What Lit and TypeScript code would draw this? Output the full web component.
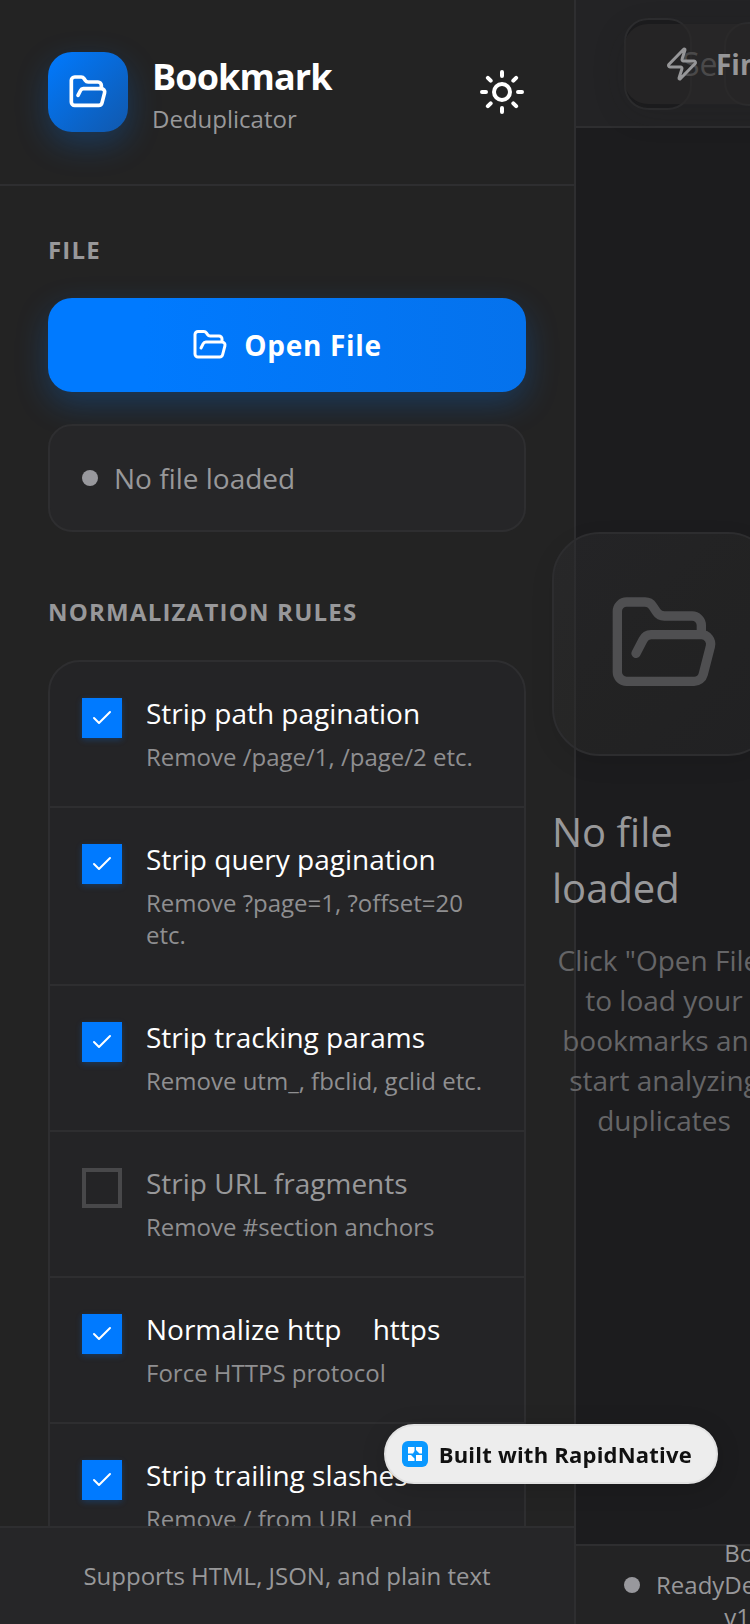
import { LitElement, html, css, svg } from "lit";
import { customElement, state } from "lit/decorators.js";

interface Rule {
  id: string;
  title: string;
  tail?: string;
  note: string;
  on: boolean;
}

const FOLDER = svg`<path d="m6 14 1.5-2.9A2 2 0 0 1 9.24 10H20a2 2 0 0 1 1.94 2.5l-1.54 6a2 2 0 0 1-1.95 1.5H4a2 2 0 0 1-2-2V5a2 2 0 0 1 2-2h3.9a2 2 0 0 1 1.69.9l.81 1.2a2 2 0 0 0 1.67.9H18a2 2 0 0 1 2 2v2"/>`;
const SUN = svg`<circle cx="12" cy="12" r="4"/><path d="M12 2v2M12 20v2M4.93 4.93l1.41 1.41M17.66 17.66l1.41 1.41M2 12h2M20 12h2M6.34 17.66l-1.41 1.41M19.07 4.93l-1.41 1.41"/>`;
const ZAP = svg`<path d="M4 14a1 1 0 0 1-.78-1.63l9.9-10.2a.5.5 0 0 1 .86.46l-1.92 6.02A1 1 0 0 0 13 10h7a1 1 0 0 1 .78 1.63l-9.9 10.2a.5.5 0 0 1-.86-.46l1.92-6.02A1 1 0 0 0 11 14z"/>`;
const CHECK = svg`<path d="M20 6 9 17l-5-5"/>`;

const icon = (size: number, stroke: number, shape: unknown, cls = "") => html`<svg
  class=${cls}
  width=${size}
  height=${size}
  viewBox="0 0 24 24"
  fill="none"
  stroke="currentColor"
  stroke-width=${stroke}
  stroke-linecap="round"
  stroke-linejoin="round"
  aria-hidden="true"
>${shape}</svg>`;

@customElement("app-root")
export class AppRoot extends LitElement {
  @state() private rules: Rule[] = [
    { id: "path", title: "Strip path pagination", note: "Remove /page/1, /page/2 etc.", on: true },
    { id: "query", title: "Strip query pagination", note: "Remove ?page=1, ?offset=20 etc.", on: true },
    { id: "tracking", title: "Strip tracking params", note: "Remove utm_, fbclid, gclid etc.", on: true },
    { id: "fragment", title: "Strip URL fragments", note: "Remove #section anchors", on: false },
    { id: "https", title: "Normalize http", tail: "https", note: "Force HTTPS protocol", on: true },
    { id: "slash", title: "Strip trailing slashes", note: "Remove / from URL end", on: true },
  ];

  static styles = css`
    :host {
      --line: #2e2e30;
      --muted: #98989a;
      --glow: 0 12px 32px rgba(0, 122, 255, 0.25);
      display: flex;
      height: 100vh;
      overflow: hidden;
      background: #1c1c1e;
      color: #fff;
      font-family: "Open Sans", "Noto Sans", sans-serif;
      font-size: 28px;
      line-height: 40px;
    }
    * {
      box-sizing: border-box;
      margin: 0;
    }
    button,
    input {
      font: inherit;
      color: inherit;
      border: 0;
      padding: 0;
      background: none;
    }
    svg {
      display: block;
      flex: none;
    }

    .sidebar {
      flex: none;
      width: 576px;
      display: flex;
      flex-direction: column;
      background: #232323;
      border-right: 2px solid var(--line);
    }
    .brand {
      display: flex;
      align-items: center;
      gap: 24px;
      padding: 52px 48px;
      border-bottom: 2px solid var(--line);
    }
    .logo {
      display: grid;
      place-items: center;
      width: 80px;
      height: 80px;
      border-radius: 24px;
      background: linear-gradient(135deg, #007aff, #1158ac);
      box-shadow: var(--glow);
    }
    .names {
      flex: 1;
      margin: -4px 0;
    }
    .name {
      font-size: 36px;
      line-height: 54px;
      font-weight: 700;
      letter-spacing: -0.025em;
    }
    .sub {
      color: var(--muted);
      font-size: 24px;
      line-height: 30px;
    }
    .scroll {
      flex: 1;
      min-height: 0;
      overflow: hidden;
      display: flex;
      flex-direction: column;
      gap: 64px;
      padding: 48px;
    }
    .section {
      display: flex;
      flex-direction: column;
      gap: 32px;
    }
    .heading {
      color: var(--muted);
      font-size: 24px;
      line-height: 32px;
      font-weight: 700;
      letter-spacing: 0.05em;
    }
    .open {
      display: flex;
      align-items: center;
      justify-content: center;
      gap: 16px;
      padding: 28px;
      line-height: 38px;
      border-radius: 24px;
      background: linear-gradient(90deg, #007aff 20%, #0572ec);
      box-shadow: var(--glow);
      font-weight: 700;
      letter-spacing: 0.025em;
    }
    .status {
      position: relative;
      display: flex;
      align-items: center;
      gap: 16px;
      padding: 32px;
      border: 2px solid var(--line);
      border-radius: 24px;
      background: #262628;
      color: var(--muted);
    }
    .dot {
      flex: none;
      width: 16px;
      height: 16px;
      border-radius: 50%;
      background: #98989d;
    }
    .rules {
      border: 2px solid var(--line);
      border-radius: 32px;
      background: #242426;
      overflow: hidden;
    }
    .rule {
      display: flex;
      align-items: flex-start;
      gap: 24px;
      padding: 31px 32px 33px;
      border-bottom: 2px solid var(--line);
    }
    .box {
      flex: none;
      display: grid;
      place-items: center;
      margin-top: 5px;
    }
    .box > * {
      grid-area: 1 / 1;
    }
    .tick {
      appearance: none;
      width: 40px;
      height: 40px;
      border: 4px solid #48484a;
    }
    .tick:checked {
      border-color: #007aff;
      background: #007aff;
      box-shadow: 0 2px 6px rgba(0, 122, 255, 0.25);
    }
    .mark {
      pointer-events: none;
    }
    .words {
      display: flex;
      flex-direction: column;
      gap: 8px;
    }
    .off {
      color: var(--muted);
    }
    .tail {
      margin-left: 24px;
    }
    .note {
      color: #8f8f91;
      font-size: 24px;
      line-height: 32px;
    }
    .support {
      padding: 32px;
      border-top: 2px solid var(--line);
      background: #262628;
      color: var(--muted);
      font-size: 24px;
      line-height: 32px;
      text-align: center;
    }

    .main {
      flex: 1;
      min-width: 0;
      display: flex;
      flex-direction: column;
    }
    .toolbar {
      position: relative;
      flex: none;
      display: flex;
      align-items: center;
      gap: 32px;
      height: 128px;
      padding: 2px 48px 0;
      background: #232325;
      border-bottom: 2px solid var(--line);
    }
    .search,
    .chip {
      flex: none;
      border: 2px solid #2d2d2f;
      border-radius: 24px;
    }
    .search {
      width: 68px;
      height: 92px;
      background: #1c1c1e;
    }
    .chip {
      width: 160px;
      height: 84px;
      background: #212123;
    }
    .find {
      position: absolute;
      left: 48px;
      top: 24px;
      display: flex;
      align-items: center;
      gap: 16px;
      height: 80px;
      padding: 0 40px;
      border-radius: 24px;
      background: rgba(41, 40, 40, 0.7);
      box-shadow: 0 8px 32px rgba(28, 28, 28, 0.2);
      color: #969698;
      font-weight: 700;
      white-space: nowrap;
    }
    .query {
      position: absolute;
      left: 106px;
      top: 44px;
      width: 36px;
      height: 40px;
      font-size: 32px;
    }
    .query::placeholder {
      color: #98989a;
      opacity: 1;
    }
    .stage {
      flex: 1;
      display: flex;
      flex-direction: column;
      align-items: center;
      justify-content: center;
      padding-left: 2px;
    }
    .empty {
      flex: none;
      width: 224px;
    }
    .tile {
      display: grid;
      place-items: center;
      height: 224px;
      border: 2px solid #2d2d2f;
      border-radius: 48px;
      background: linear-gradient(135deg, rgba(44, 44, 47, 0.5), rgba(41, 41, 40, 0.5) 50%, rgba(38, 38, 40, 0.5));
      box-shadow: 0 8px 24px rgba(0, 0, 0, 0.08);
      color: #4f4f51;
    }
    .title {
      margin-top: 48px;
      color: #98989a;
      font-size: 40px;
      line-height: 56px;
      font-weight: 400;
    }
    .hint {
      margin-top: 24px;
      color: #656567;
      text-align: center;
    }
    .foot {
      flex: none;
      display: flex;
      align-items: center;
      height: 80px;
      padding: 0 48px;
      border-top: 2px solid var(--line);
      background: #232324;
      color: var(--muted);
      font-size: 24px;
      line-height: 32px;
    }
    .ready {
      display: flex;
      align-items: center;
      gap: 16px;
    }
    .version {
      width: 0;
    }

    .badge {
      position: fixed;
      right: 32px;
      bottom: 140px;
      display: flex;
      align-items: center;
      gap: 11px;
      padding: 13px 24px 13px 16px;
      border: 2px solid #e2e2e2;
      border-radius: 30px;
      background: #ededed;
      box-shadow: 0 4px 24px rgba(0, 0, 0, 0.15);
      color: #111;
      font-size: 22px;
      line-height: 30px;
      font-weight: 700;
      letter-spacing: 0.01em;
      text-decoration: none;
      white-space: nowrap;
    }
  `;

  private toggle(id: string) {
    this.rules = this.rules.map((r) => (r.id === id ? { ...r, on: !r.on } : r));
  }

  private renderRule(r: Rule) {
    return html`<label class="rule">
      <span class="box">
        <input class="tick" type="checkbox" .checked=${r.on} @change=${() => this.toggle(r.id)} />
        ${r.on ? icon(24, 2, CHECK, "mark") : ""}
      </span>
      <span class="words">
        <span class=${r.on ? "on" : "off"}>${r.title}${r.tail ? html` <span class="tail">${r.tail}</span>` : ""}</span>
        <span class="note">${r.note}</span>
      </span>
    </label>`;
  }

  render() {
    return html`
      <aside class="sidebar">
        <header class="brand">
          <div class="logo">${icon(40, 2.2, FOLDER)}</div>
          <div class="names">
            <h1 class="name">Bookmark</h1>
            <p class="sub">Deduplicator</p>
          </div>
          <button aria-label="Toggle theme">${icon(48, 2, SUN)}</button>
        </header>
        <div class="scroll">
          <section class="section">
            <h2 class="heading">FILE</h2>
            <button class="open">${icon(36, 2, FOLDER)}<span>Open File</span></button>
            <div class="status"><span class="dot"></span>No file loaded</div>
          </section>
          <section class="section">
            <h2 class="heading">NORMALIZATION RULES</h2>
            <div class="rules">${this.rules.map((r) => this.renderRule(r))}</div>
          </section>
        </div>
        <footer class="support">Supports HTML, JSON, and plain text</footer>
      </aside>

      <main class="main">
        <header class="toolbar">
          <div class="search"></div>
          <div class="chip"></div>
          <input class="query" type="text" placeholder="Search" aria-label="Search" />
          <button class="find">${icon(36, 2, ZAP)}<span>Find Duplicates</span></button>
        </header>
        <section class="stage">
          <div class="empty">
            <div class="tile">${icon(112, 2, FOLDER)}</div>
            <h2 class="title">No file loaded</h2>
            <p class="hint">Click "Open File" to load your bookmarks and start analyzing duplicates</p>
          </div>
        </section>
        <footer class="foot">
          <span class="ready"><span class="dot"></span>Ready</span>
          <span class="version">Bookmark Deduplicator v1.0</span>
        </footer>
      </main>

      <a class="badge" href="#">
        <svg width="26" height="26" viewBox="0 0 26 26" aria-hidden="true">
          <rect width="26" height="26" rx="6" fill="#0a98ff" />
          <path fill="#fff" d="M6 6h6.500v4l-1.500 2.500H6zM14 6h6v6.500h-2.500L14 9zM6 14h3l3.500 3.500V20H6zM14 14h6v6h-6z" />
        </svg>
        <span>Built with RapidNative</span>
      </a>
    `;
  }
}
